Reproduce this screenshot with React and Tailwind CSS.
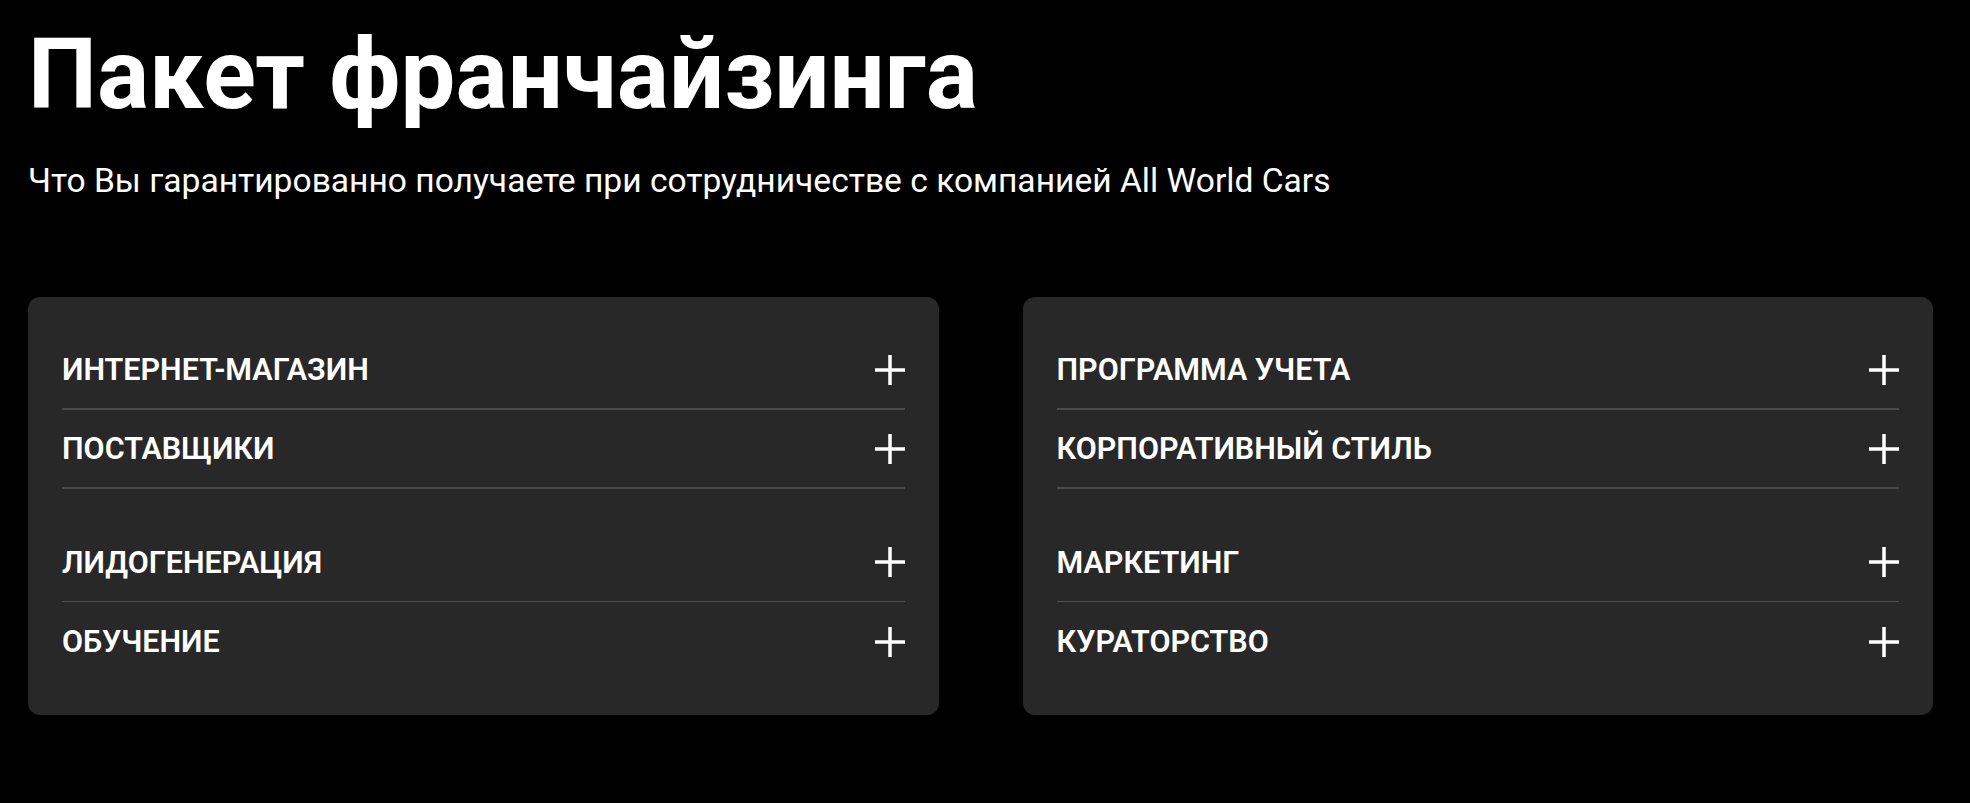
import React from "react";

const columns = [
  [
    ["ИНТЕРНЕТ-МАГАЗИН", "ПОСТАВЩИКИ"],
    ["ЛИДОГЕНЕРАЦИЯ", "ОБУЧЕНИЕ"],
  ],
  [
    ["ПРОГРАММА УЧЕТА", "КОРПОРАТИВНЫЙ СТИЛЬ"],
    ["МАРКЕТИНГ", "КУРАТОРСТВО"],
  ],
];

const Plus = () => (
  <svg width="30" height="30" viewBox="0 0 30 30" className="shrink-0">
    <path d="M15 0v30M0 15h30" stroke="#fff" strokeWidth="3.5" fill="none" />
  </svg>
);

const Item = ({ title, border }) => (
  <div
    className={`flex items-center justify-between h-[79px] ${
      border === 2 ? "border-b-2 border-[#4a4a4a]" : border === 1 ? "border-b border-[#505050]" : ""
    }`}
  >
    <span className="text-[30.5px] font-semibold text-white">{title}</span>
    <Plus />
  </div>
);

export default function App() {
  return (
    <div
      className="min-h-screen bg-black text-white pl-[28px] pr-[37px] pt-[27px]"
      style={{ fontFamily: "Roboto, 'Noto Sans', sans-serif" }}
    >
      <h1 className="text-[97.5px] font-bold leading-none">Пакет франчайзинга</h1>
      <p className="mt-[35px] text-[33.6px] leading-tight">
        Что Вы гарантированно получаете при сотрудничестве с компанией All World Cars
      </p>

      <div className="mt-[96px] grid grid-cols-2 gap-[84px]">
        {columns.map((groups, ci) => (
          <div key={ci} className="bg-[#282828] rounded-[12px] p-[34px] flex flex-col gap-[34px]">
            {groups.map((items, gi) => (
              <div key={gi}>
                {items.map((t, i) => (
                  <Item key={t} title={t} border={gi === 0 ? 2 : i === 0 ? 1 : 0} />
                ))}
              </div>
            ))}
          </div>
        ))}
      </div>
    </div>
  );
}
